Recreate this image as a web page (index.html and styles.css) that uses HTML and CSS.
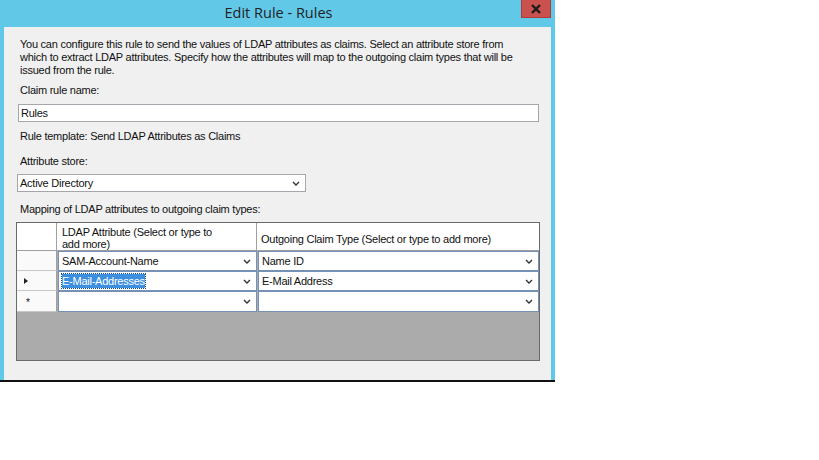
FILE: index.html
```html
<!DOCTYPE html>
<html>
<head>
<meta charset="utf-8">
<link rel="stylesheet" href="styles.css">
</head>
<body>
<div class="window">
  <div class="titlebar">
    <span></span>
    <span class="title">Edit Rule - Rules</span>
    <span class="close"><svg width="12" height="10" viewBox="0 0 12 10"><path d="M2 1 L10 9 M10 1 L2 9" stroke="#1b1b1b" stroke-width="2.4" fill="none"/></svg></span>
  </div>
  <div class="content">
    <p class="lbl intro">You can configure this rule to send the values of LDAP attributes as claims. Select an attribute store from which to extract LDAP attributes. Specify how the attributes will map to the outgoing claim types that will be issued from the rule.</p>
    <p class="lbl gap7">Claim rule name:</p>
    <div class="textbox">Rules</div>
    <p class="lbl gap8">Rule template: Send LDAP Attributes as Claims</p>
    <p class="lbl gap12">Attribute store:</p>
    <div class="select"><span>Active Directory</span><svg class="chev" width="8" height="5" viewBox="0 0 8 5"><path d="M1 1 L4 4 L7 1" stroke="#333" stroke-width="1.4" fill="none"/></svg></div>
    <p class="lbl gap11">Mapping of LDAP attributes to outgoing claim types:</p>
    <div class="grid">
      <div class="hcell rh"></div>
      <div class="hcell h1">LDAP Attribute (Select or type to<br>add more)</div>
      <div class="hcell h2">Outgoing Claim Type (Select or type to add more)</div>

      <div class="rh rowhead"></div>
      <div class="cell"><span>SAM-Account-Name</span><svg class="chev" width="8" height="5" viewBox="0 0 8 5"><path d="M1 1 L4 4 L7 1" stroke="#333" stroke-width="1.4" fill="none"/></svg></div>
      <div class="cell"><span>Name ID</span><svg class="chev" width="8" height="5" viewBox="0 0 8 5"><path d="M1 1 L4 4 L7 1" stroke="#333" stroke-width="1.4" fill="none"/></svg></div>

      <div class="rh rowhead"><span class="arrow"></span></div>
      <div class="cell"><span class="sel">E-Mail-Addresses</span><svg class="chev" width="8" height="5" viewBox="0 0 8 5"><path d="M1 1 L4 4 L7 1" stroke="#333" stroke-width="1.4" fill="none"/></svg></div>
      <div class="cell"><span>E-Mail Address</span><svg class="chev" width="8" height="5" viewBox="0 0 8 5"><path d="M1 1 L4 4 L7 1" stroke="#333" stroke-width="1.4" fill="none"/></svg></div>

      <div class="rh rowhead"><span class="star">*</span></div>
      <div class="cell"><span></span><svg class="chev" width="8" height="5" viewBox="0 0 8 5"><path d="M1 1 L4 4 L7 1" stroke="#333" stroke-width="1.4" fill="none"/></svg></div>
      <div class="cell"><span></span><svg class="chev" width="8" height="5" viewBox="0 0 8 5"><path d="M1 1 L4 4 L7 1" stroke="#333" stroke-width="1.4" fill="none"/></svg></div>

      <div class="empty"></div>
    </div>
  </div>
</div>
</body>
</html>
```
FILE: styles.css
```css
html, body {
  margin: 0;
  padding: 0;
  background: #ffffff;
}
body {
  font-family: "Liberation Sans", Arial, sans-serif;
  font-size: 11px;
  letter-spacing: -0.25px;
  color: #111;
}
.window {
  width: 547px;
  height: 380px;
  padding: 0 4px;
  background: #62c8e8;
  border-bottom: 2px solid #111;
  display: flex;
  flex-direction: column;
}
.titlebar {
  height: 27px;
  flex: none;
  display: grid;
  grid-template-columns: 1fr auto 1fr;
  align-items: start;
}
.title {
  font-family: "Open Sans", "Noto Sans", sans-serif;
  font-size: 14.5px;
  letter-spacing: 0;
  color: #222;
  line-height: 26px;
  margin-left: 2px;
}
.close {
  justify-self: end;
  width: 30px;
  height: 18px;
  background: #c9524f;
  box-sizing: border-box;
  border: 1px solid #b03c3a;
  border-top: none;
  display: flex;
  align-items: center;
  justify-content: center;
}
.content {
  flex: 1;
  background: #f0f0f0;
  padding: 11px 0 0 12px;
}
.lbl {
  margin: 0;
  padding-left: 4px;
  line-height: 13px;
}
.intro {
  padding-right: 20px;
}
.gap7 { margin-top: 7px; }
.gap8 { margin-top: 8px; }
.gap11 { margin-top: 11px; }
.gap12 { margin-top: 12px; }
.textbox {
  margin: 7px 0 0 2px;
  width: 521px;
  height: 18px;
  box-sizing: border-box;
  border: 1px solid #a4a6ab;
  background: #fff;
  padding-left: 2px;
  line-height: 16px;
}
.select {
  margin: 6px 0 0 1px;
  width: 289px;
  height: 18px;
  box-sizing: border-box;
  border: 1px solid #a4a6ab;
  background: #fff;
  padding: 0 5px 0 2px;
  display: flex;
  align-items: center;
  justify-content: space-between;
}
.chev {
  flex: none;
}
.grid {
  margin-top: 6px;
  width: 524px;
  height: 139px;
  box-sizing: border-box;
  border: 1px solid #6a6a6a;
  background: #ababab;
  display: grid;
  grid-template-columns: 40px 200px 1fr;
  grid-template-rows: 28px 20px 20px 21px 1fr;
}
.hcell {
  background: #fff;
  border-right: 1px solid #a0a0a0;
  border-bottom: 1px solid #a0a0a0;
}
.h1 {
  padding: 3px 0 0 5px;
  line-height: 12px;
}
.h2 {
  border-right: none;
  padding-left: 4px;
  line-height: 33px;
}
.rowhead {
  background: #fafafa;
  border-right: 1px solid #a0a0a0;
  border-bottom: 1px solid #c8c8c8;
  display: flex;
  align-items: center;
}
.arrow {
  margin-left: 7px;
  width: 0;
  height: 0;
  border-top: 3.5px solid transparent;
  border-bottom: 3.5px solid transparent;
  border-left: 4px solid #222;
}
.star {
  margin-left: 9px;
  font-size: 10px;
  line-height: 10px;
  padding-top: 3px;
}
.cell {
  background: #fff;
  border: 1px solid #7592b6;
  margin-left: 1px;
  padding: 0 5px 0 3px;
  display: flex;
  align-items: center;
  justify-content: space-between;
  line-height: 14px;
}
.sel {
  background: #3d8fe0;
  color: #fff;
  outline: 1px dotted #1e4f80;
}
.empty {
  grid-column: 1 / 4;
}
```
